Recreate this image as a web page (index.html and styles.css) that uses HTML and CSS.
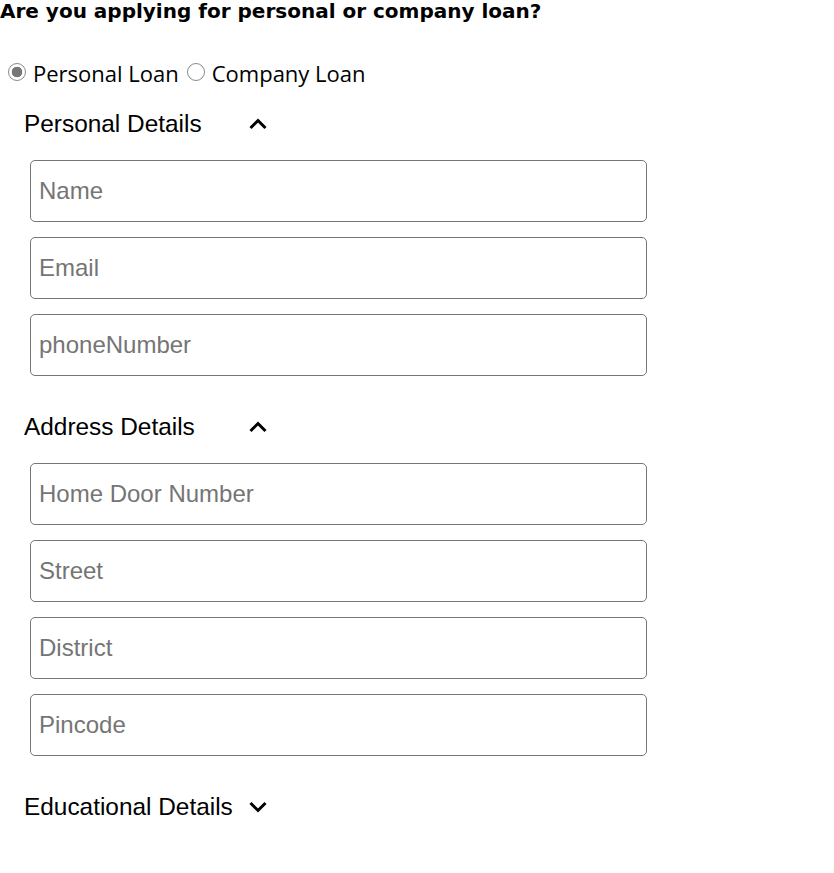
FILE: index.html
```html
<!DOCTYPE html>
<html>
<head>
<meta charset="utf-8">
<link rel="stylesheet" href="styles.css">
</head>
<body>
<h1 class="question">Are you applying for personal or company loan?</h1>
<div class="radios">
  <label class="radio-label"><input type="radio" name="loan" class="radio" checked>Personal Loan</label>
  <label class="radio-label"><input type="radio" name="loan" class="radio">Company Loan</label>
</div>
<section class="section">
  <div class="section-head"><span>Personal Details</span>
    <svg class="chev" width="18" height="12" viewBox="0 0 18 12"><path d="M1.5 10 L9 2.5 L16.5 10" fill="none" stroke="#000" stroke-width="3"/></svg>
  </div>
  <div class="fields">
    <input class="field" placeholder="Name">
    <input class="field" placeholder="Email">
    <input class="field" placeholder="phoneNumber">
  </div>
</section>
<section class="section">
  <div class="section-head"><span>Address Details</span>
    <svg class="chev" width="18" height="12" viewBox="0 0 18 12"><path d="M1.5 10 L9 2.5 L16.5 10" fill="none" stroke="#000" stroke-width="3"/></svg>
  </div>
  <div class="fields">
    <input class="field" placeholder="Home Door Number">
    <input class="field" placeholder="Street">
    <input class="field" placeholder="District">
    <input class="field" placeholder="Pincode">
  </div>
</section>
<section class="section">
  <div class="section-head"><span>Educational Details</span>
    <svg class="chev" width="18" height="12" viewBox="0 0 18 12"><path d="M1.5 2 L9 9.5 L16.5 2" fill="none" stroke="#000" stroke-width="3"/></svg>
  </div>
</section>
</body>
</html>
```
FILE: styles.css
```css
body {
  margin: 0;
  background: #fff;
  color: #000;
  font-family: "Liberation Sans", Arial, sans-serif;
}
.question {
  margin: -2px 0 0;
  font-family: "DejaVu Sans", sans-serif;
  font-weight: 700;
  font-size: 20px;
  line-height: 26px;
  white-space: nowrap;
}
.radios {
  display: flex;
  align-items: center;
  padding: 35px 8px 0;
  font-family: "Open Sans", sans-serif;
  font-size: 22px;
  line-height: 28px;
}
.radio-label {
  display: flex;
  align-items: center;
}
.radio {
  appearance: none;
  -webkit-appearance: none;
  margin: 0 7px 2px 0;
  width: 18px;
  height: 18px;
  border: 1px solid #8a8a8a;
  border-radius: 50%;
  box-sizing: border-box;
  background: #fff;
}
.radio:checked {
  background: radial-gradient(circle, #777 0 5px, #fff 5.6px);
}
.radio-label + .radio-label { margin-left: 8px; }
.section {
  padding-left: 24px;
}
.section-head {
  display: flex;
  align-items: center;
  justify-content: space-between;
  width: 243px;
  font-size: 24.4px;
  height: 28px;
  margin-top: 23px;
  white-space: nowrap;
}
.chev { flex-shrink: 0; }
.fields {
  display: flex;
  flex-direction: column;
  gap: 15px;
  padding: 22px 0 14px 6px;
}
.field {
  box-sizing: border-box;
  width: 617px;
  height: 62px;
  border: 1px solid #767676;
  border-radius: 5px;
  padding: 0 8px;
  font-family: "Liberation Sans", Arial, sans-serif;
  font-size: 24px;
  color: #000;
  outline: none;
}
.field::placeholder { color: #757575; }
```
